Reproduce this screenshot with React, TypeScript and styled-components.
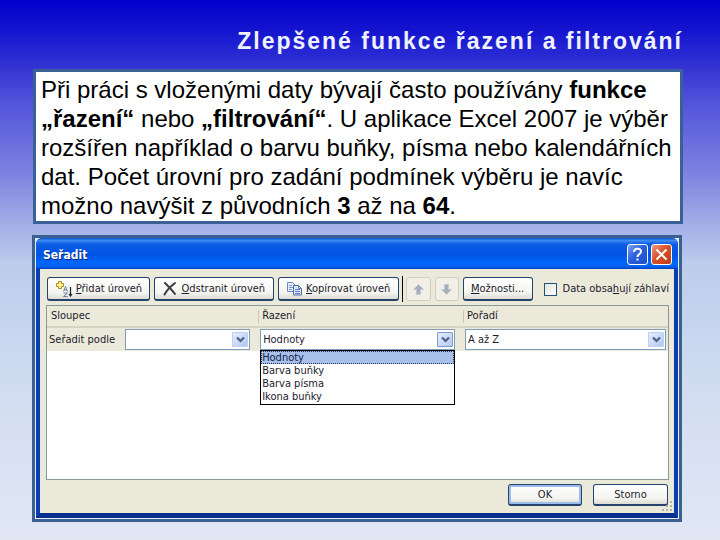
import React from "react";
import styled, { createGlobalStyle, css } from "styled-components";

const uiFont = `"DejaVu Sans Condensed", "Noto Sans", sans-serif`;

const GlobalStyle = createGlobalStyle`
  *, *::before, *::after { box-sizing: border-box; }
  html {
    min-height: 100%;
    background: linear-gradient(#0000cc 0%, #1616d0 6%, #3636d4 13%, #5254da 19%, #7c82e0 32%, #a0ace6 41%, #bccdec 49%, #cfdbf0 70%, #e1e8f4 100%);
  }
  body { margin: 0; }
`;

const Slide = styled.main`
  display: flex;
  flex-direction: column;
  padding: 26px 37px 18px 32px;
`;

const Title = styled.h1`
  margin: 0 0 13px;
  color: #eef2ff;
  font: bold 23px/30px "Liberation Sans", Arial, sans-serif;
  letter-spacing: 2px;
  text-align: right;
`;

const TextBox = styled.p`
  margin: 0 0 11px 1px;
  padding: 3px 5px 1px;
  border: 3px solid #3a6096;
  background: #fff;
  color: #000;
  font: 24px/29px "Liberation Sans", Arial, sans-serif;
`;

const Frame = styled.div`
  margin-right: 1px;
  border: 3px solid #3a6092;
  padding: 0 1px 1px;
  background: #e8eef8;
`;

const Dialog = styled.section`
  border: solid #0a3cb4;
  border-width: 0 4px 5px;
  border-bottom-color: #06308c;
  border-radius: 6px 6px 0 0;
  background: #ebe9da;
  font: 11px/14px ${uiFont};
  color: #1c1c2c;
`;

const TitleBar = styled.header`
  display: flex;
  align-items: center;
  gap: 3px;
  height: 31px;
  margin: 0 -4px;
  padding: 2px 6px 0 7px;
  border-radius: 6px 6px 0 0;
  background: linear-gradient(#0a50c8 0%, #3c8cf8 8%, #0c5ce4 20%, #0054e4 55%, #0066fc 80%, #0060f4 92%, #0040bc 100%);
`;

const DialogTitle = styled.h2`
  flex: 1;
  margin: 0;
  color: #fff;
  font: bold 12px/16px ${uiFont};
  text-shadow: 1px 1px 0 #0a2c80;
`;

const CaptionButton = styled.button<{ $close?: boolean }>`
  display: flex;
  align-items: center;
  justify-content: center;
  width: 21px;
  height: 21px;
  padding: 0;
  border: 1px solid #fff;
  border-radius: 3px;
  background: ${(p) =>
    p.$close
      ? "linear-gradient(135deg, #f09880, #d8502c 45%, #c03c18)"
      : "linear-gradient(135deg, #7ca4f8, #2c60dc 45%, #1c50c8)"};
`;

const Content = styled.div`
  padding: 8px 5px 7px 6px;
`;

const Toolbar = styled.div`
  display: flex;
  align-items: center;
  gap: 4px;
  height: 24px;
  margin-bottom: 4px;
  padding-left: 1px;
`;

const Button = styled.button<{ $width: number; $primary?: boolean; $faded?: boolean }>`
  display: flex;
  align-items: center;
  justify-content: center;
  gap: 3px;
  flex: 0 1 ${(p) => p.$width}px;
  height: 24px;
  padding: 0 2px;
  border: 1px solid #24446c;
  border-bottom-width: 2px;
  border-radius: 3px;
  background: linear-gradient(#ffffff, #f4f4f0 70%, #dcdcd4);
  color: #1c1c2c;
  font: inherit;
  white-space: nowrap;
  ${(p) => p.$primary && css`box-shadow: inset 0 0 0 2px #9cbcec;`}
  ${(p) => p.$faded && css`border: 1px solid #cfcdbd; background: #f2f0e6;`}
`;

const Separator = styled.span`
  width: 1px;
  height: 26px;
  margin: 0 -1px;
  background: #000;
`;

const CheckLabel = styled.label`
  display: flex;
  align-items: center;
  gap: 6px;
  margin-left: 7px;
  white-space: nowrap;
`;

const CheckBox = styled.input`
  appearance: none;
  width: 13px;
  height: 13px;
  margin: 0;
  border: 1px solid #24507c;
  background: linear-gradient(135deg, #e4e4dc, #fff);
`;

const Panel = styled.div`
  height: 175px;
  border: 1px solid #8a9a9a;
  background: #fff;
`;

const Levels = styled.table`
  width: 100%;
  table-layout: fixed;
  border-collapse: collapse;
  background: #ebe9da;
`;

const Heading = styled.th<{ $share: number }>`
  width: ${(p) => p.$share}%;
  height: 21px;
  padding: 0 4px;
  border-bottom: 2px solid #d6d3c4;
  font-weight: normal;
  text-align: left;
  & + & { background: linear-gradient(#c8c5b4, #c8c5b4) 0 4px / 1px 13px no-repeat; }
`;

const Cell = styled.td`
  height: 24px;
  padding: 0 8px 0 2px;
  &:last-child { padding-right: 2px; }
`;

const Field = styled.div`
  display: flex;
  align-items: center;
`;

const FieldLabel = styled.label`
  flex: 0 0 76px;
`;

const Combo = styled.div`
  position: relative;
  flex: 1;
  min-width: 0;
`;

const Select = styled.select`
  display: block;
  appearance: none;
  width: 100%;
  height: 21px;
  padding: 0 20px 0 2px;
  border: 1px solid #7f9db9;
  border-radius: 0;
  background: #fff;
  color: #1c1c2c;
  font: inherit;
`;

const DropMark = styled.span<{ $active?: boolean }>`
  position: absolute;
  top: 3px;
  right: 2px;
  display: flex;
  align-items: center;
  justify-content: center;
  width: 16px;
  height: 15px;
  border: 1px solid ${(p) => (p.$active ? "#7c9cd0" : "#bccef4")};
  border-radius: 1px;
  background: linear-gradient(135deg, #e4eefe, #b4c8f4);
  pointer-events: none;
`;

const OptionList = styled.ul`
  position: absolute;
  z-index: 1;
  top: 100%;
  left: 0;
  right: 0;
  margin: 0;
  padding: 0 0 1px;
  border: 1px solid #000;
  background: #fff;
  list-style: none;
  line-height: 13px;
`;

const Option = styled.li<{ $selected?: boolean }>`
  padding: 0 1px;
  ${(p) =>
    p.$selected &&
    css`
      outline: 1px dotted #203060;
      outline-offset: -1px;
      background: #a8c0e8;
      color: #101c50;
    `}
`;

const Footer = styled.footer`
  display: flex;
  justify-content: flex-end;
  gap: 11px;
  position: relative;
  padding: 4px 1px 0;
  ${Button} { height: 22px; }
`;

const Grip = styled.svg`
  position: absolute;
  right: -4px;
  bottom: -6px;
`;

const Chevron = () => (
  <svg width="9" height="7" viewBox="0 0 9 7" aria-hidden="true">
    <path d="M1 1.5 4.5 5 8 1.5" fill="none" stroke="#4a6184" strokeWidth="2.2" />
  </svg>
);

const AddIcon = () => (
  <svg width="18" height="18" viewBox="0 0 18 18" aria-hidden="true">
    <path d="M3.500 1.500h3v2h2v3h-2v2h-3v-2h-2v-3h2z" fill="#fff3a0" stroke="#b08c1c" />
    <path d="M8.500 11.500 10.500 6.500 12.500 11.500M9 10h3M8.500 13h4L8.500 16.500h4.200" fill="none" stroke="#6c80a0" />
    <path d="M15.500 7v9M14 14l1.500 2L17 14" fill="none" stroke="#1c2434" strokeWidth="1.200" />
  </svg>
);

const CrossIcon = () => (
  <svg width="16" height="16" viewBox="0 0 16 16" aria-hidden="true">
    <path d="M3 2c3 3 7 7 10 11M13 2C9 5 5 9 2.500 13.500" fill="none" stroke="#3c3c44" strokeWidth="2" strokeLinecap="round" />
  </svg>
);

const CopyIcon = () => (
  <svg width="17" height="16" viewBox="0 0 17 16" aria-hidden="true">
    <path d="M1.500 1.500h5l3 3v6h-8z" fill="#e4eefc" stroke="#6c88b8" />
    <path d="M3 4.500h3M3 6.500h4M3 8.500h3" stroke="#7c9ccc" />
    <path d="M7.500 4.500h5l3 3v6.500h-8z" fill="#dce8fa" stroke="#5070a8" />
    <path d="M12.500 4.500v3h3M9 8.500h5M9 10.500h5M9 12.500h5" fill="none" stroke="#5c80bc" />
  </svg>
);

const ArrowIcon = ({ down }: { down?: boolean }) => (
  <svg width="13" height="13" viewBox="0 0 13 13" aria-hidden="true">
    <path
      d={down ? "M4.500 1.500h4v5h3L6.500 11.500l-5-5h3z" : "M4.500 11.500h4v-5h3L6.500 1.500l-5 5h3z"}
      fill="#a4aebc"
      stroke="#c4cad2"
    />
  </svg>
);

const grip = [[8, 0], [4, 4], [8, 4], [0, 8], [4, 8], [8, 8]];

export default function App() {
  return (
    <>
      <GlobalStyle />
      <Slide>
        <Title>Zlepšené funkce řazení a filtrování</Title>
        <TextBox>
          Při práci s vloženými daty bývají často používány <b>funkce „řazení“</b> nebo{" "}
          <b>„filtrování“</b>. U aplikace Excel 2007 je výběr rozšířen například o barvu buňky,
          písma nebo kalendářních dat. Počet úrovní pro zadání podmínek výběru je navíc možno
          navýšit z původních <b>3</b> až na <b>64</b>.
        </TextBox>
        <Frame>
          <Dialog aria-labelledby="dialog-title">
            <TitleBar>
              <DialogTitle id="dialog-title">Seřadit</DialogTitle>
              <CaptionButton aria-label="Nápověda">
                <svg width="13" height="15" viewBox="0 0 13 15" aria-hidden="true">
                  <path d="M3 5C3 .8 10 .8 10 4.500 10 7 6.500 7 6.500 10" fill="none" stroke="#fff" strokeWidth="2" />
                  <rect x="5.500" y="11.500" width="2" height="2" fill="#fff" />
                </svg>
              </CaptionButton>
              <CaptionButton $close aria-label="Zavřít">
                <svg width="13" height="13" viewBox="0 0 13 13" aria-hidden="true">
                  <path d="M1.500 1.500l10 10M11.500 1.500l-10 10" stroke="#fff" strokeWidth="2" />
                </svg>
              </CaptionButton>
            </TitleBar>
            <Content>
              <Toolbar>
                <Button $width={103}><AddIcon /><span><u>P</u>řidat úroveň</span></Button>
                <Button $width={120}><CrossIcon /><span><u>O</u>dstranit úroveň</span></Button>
                <Button $width={121}><CopyIcon /><span><u>K</u>opírovat úroveň</span></Button>
                <Separator />
                <Button $width={25} $faded aria-label="Nahoru"><ArrowIcon /></Button>
                <Button $width={24} $faded aria-label="Dolů"><ArrowIcon down /></Button>
                <Button $width={70}><span><u>M</u>ožnosti...</span></Button>
                <CheckLabel>
                  <CheckBox type="checkbox" />
                  <span>Data obsa<u>h</u>ují záhlaví</span>
                </CheckLabel>
              </Toolbar>
              <Panel>
                <Levels>
                  <thead>
                    <tr>
                      <Heading $share={34}>Sloupec</Heading>
                      <Heading $share={33}>Řazení</Heading>
                      <Heading $share={33}>Pořadí</Heading>
                    </tr>
                  </thead>
                  <tbody>
                    <tr>
                      <Cell>
                        <Field>
                          <FieldLabel htmlFor="column">Seřadit podle</FieldLabel>
                          <Combo>
                            <Select id="column" />
                            <DropMark><Chevron /></DropMark>
                          </Combo>
                        </Field>
                      </Cell>
                      <Cell>
                        <Combo>
                          <Select aria-label="Řazení"><option>Hodnoty</option></Select>
                          <DropMark $active><Chevron /></DropMark>
                          <OptionList role="listbox" aria-label="Řazení">
                            <Option role="option" aria-selected $selected>Hodnoty</Option>
                            <Option role="option">Barva buňky</Option>
                            <Option role="option">Barva písma</Option>
                            <Option role="option">Ikona buňky</Option>
                          </OptionList>
                        </Combo>
                      </Cell>
                      <Cell>
                        <Combo>
                          <Select aria-label="Pořadí"><option>A až Z</option></Select>
                          <DropMark><Chevron /></DropMark>
                        </Combo>
                      </Cell>
                    </tr>
                  </tbody>
                </Levels>
              </Panel>
              <Footer>
                <Button $width={74} $primary>OK</Button>
                <Button $width={75}>Storno</Button>
                <Grip width="11" height="11" viewBox="0 0 11 11" aria-hidden="true">
                  {grip.map(([x, y]) => (
                    <rect key={`${x}-${y}`} x={x} y={y} width="2" height="2" fill="#b4b2a4" />
                  ))}
                </Grip>
              </Footer>
            </Content>
          </Dialog>
        </Frame>
      </Slide>
    </>
  );
}
